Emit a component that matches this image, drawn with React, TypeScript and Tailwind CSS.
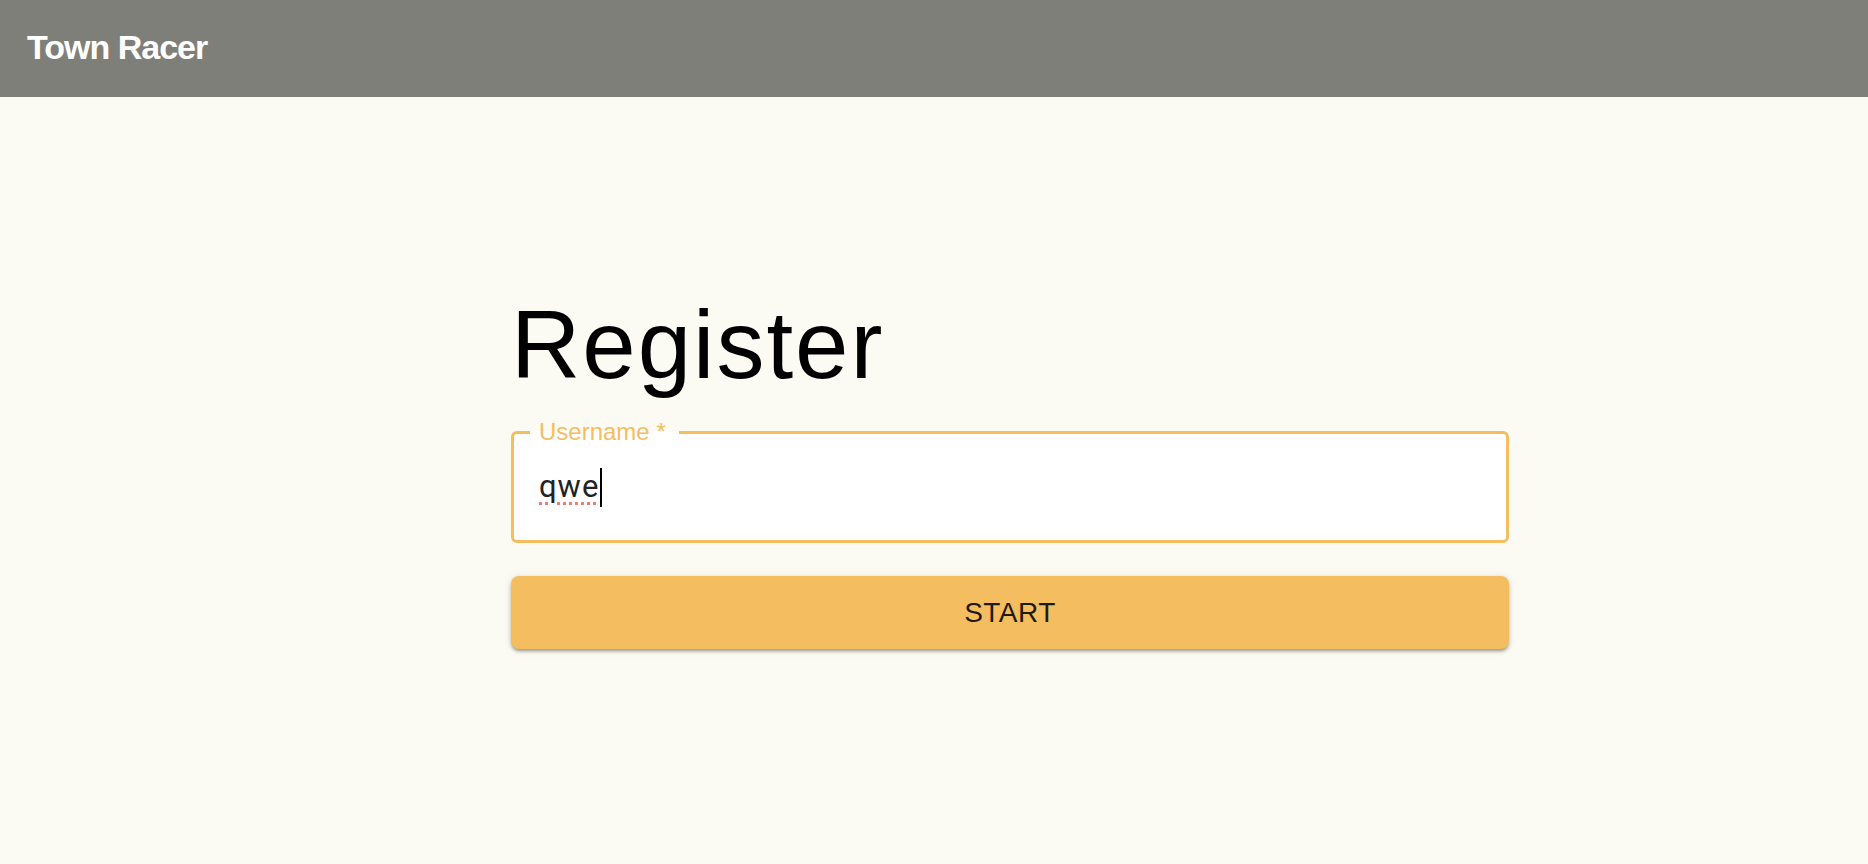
import React from 'react';

const App = () => {
  return (
    <div className="min-h-screen w-full bg-[#fbfbf3] font-['Liberation_Sans',Arial,sans-serif]">
      {/* Top bar */}
      <header className="h-[97px] w-full bg-[#7f7f7a] flex items-center pl-[27px] pb-[3px]">
        <h1 className="text-white font-bold text-[34px] tracking-[-1px] leading-none">Town Racer</h1>
      </header>

      {/* Register form */}
      <main className="w-[998px] ml-[511px] pt-[192px]">
        <h2 className="text-black text-[96px] leading-[112px] font-normal tracking-[2px]">Register</h2>

        <fieldset className="mt-[17px] w-full border-[3px] border-[#f4bd5f] rounded-[6px] bg-white p-0">
          <legend className="ml-[16px] pl-[9px] pr-[13px] text-[24px] leading-[28px] text-[#f4bd5f]">Username *</legend>
          <div className="h-[30px] mt-[26px] mb-[38px] pl-[25px] flex items-center">
            <span className="font-['Roboto',sans-serif] text-[31px] leading-[30px] tracking-[1px] text-[#222] underline decoration-dotted decoration-[3px] decoration-[#ee7d72] underline-offset-[5px]">
              qwe
            </span>
            <span className="inline-block w-[2px] h-[39px] bg-black ml-[1px]" />
          </div>
        </fieldset>

        <button className="mt-[33px] w-full h-[73px] rounded-[8px] bg-[#f4bd5f] text-[#1d1a12] text-[28px] tracking-[0.5px] shadow-[0_3px_3px_-1px_rgba(0,0,0,0.25),0_2px_4px_0_rgba(0,0,0,0.14),0_1px_8px_0_rgba(0,0,0,0.1)]">
          START
        </button>
      </main>
    </div>
  );
};

export default App;
